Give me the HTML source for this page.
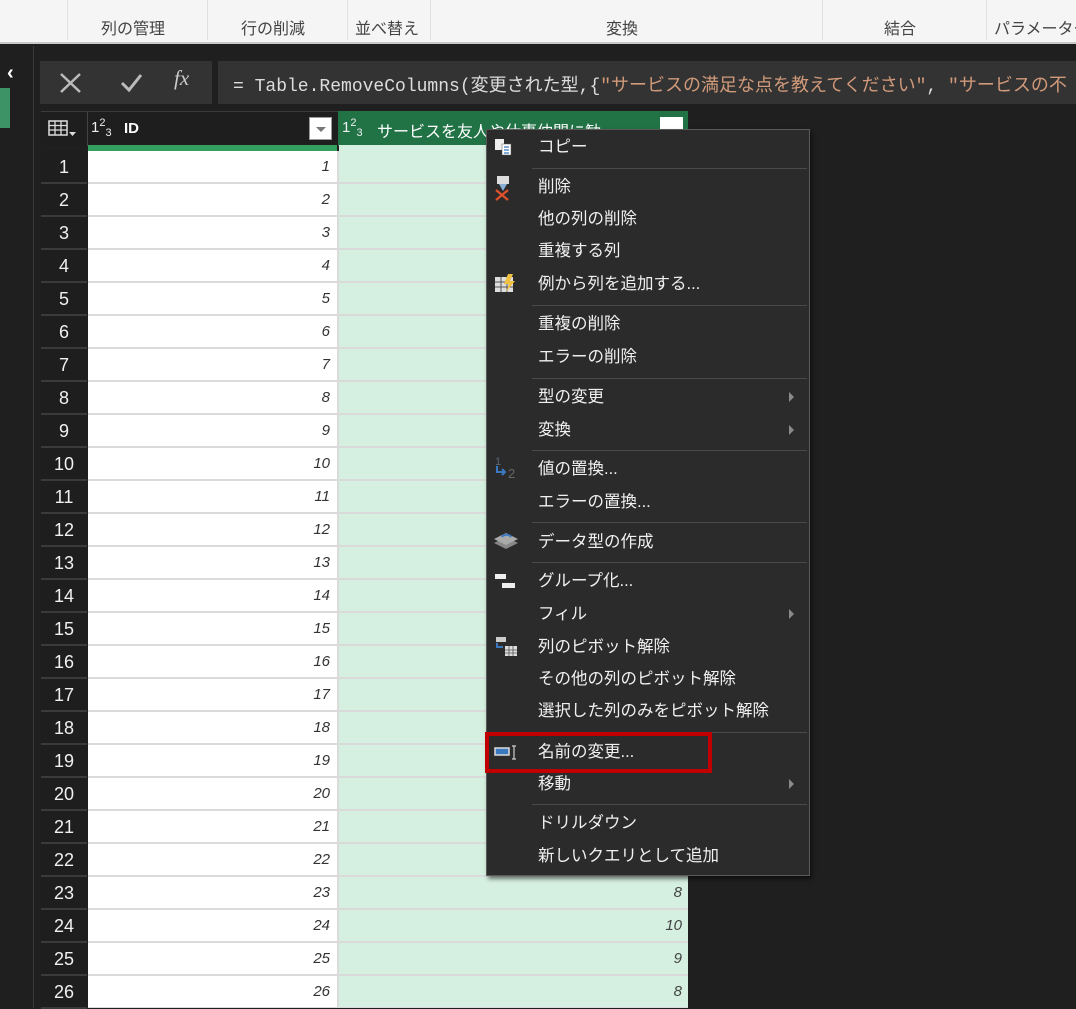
<!DOCTYPE html>
<html><head><meta charset="utf-8"><style>
*{margin:0;padding:0;box-sizing:border-box}
body{width:1076px;height:1008px;overflow:hidden;background:#1f1f1f;position:relative;font-family:"Liberation Sans","Noto Sans CJK JP",sans-serif}
.a{position:absolute}
.rib{left:0;top:0;width:1076px;height:44px;background:#f5f5f5;border-bottom:2px solid #c8c8c8}
.rl{top:15px;font-size:16px;color:#444;white-space:nowrap}
.rs{top:0;width:1px;height:40px;background:#e0e0e0}
.rh{left:41px;width:46px;height:33px;background:#1e1e1e;border-bottom:2px solid #3a3a3a;color:#f0f0f0;font-size:18px;text-align:center;line-height:33px}
.c1{left:88px;width:249px;height:31px;background:#fff;color:#333;font-size:15px;font-style:italic;text-align:right;padding-right:7px;line-height:31px}
.c2{left:339px;width:349px;height:31px;background:#d5efe0;color:#444;font-size:15px;font-style:italic;text-align:right;padding-right:6px;line-height:31px}
.mi{left:538px;font-size:16.5px;color:#f0f0f0;white-space:nowrap;line-height:20px}
.sep{left:532px;width:275px;height:1px;background:#4a4a4a}
.ar{left:789px;width:0;height:0;border-left:5px solid #8a8a8a;border-top:5px solid transparent;border-bottom:5px solid transparent}
</style></head><body>
<div class="a rib"></div>
<div class="a rs" style="left:67px"></div><div class="a rs" style="left:207px"></div><div class="a rs" style="left:347px"></div><div class="a rs" style="left:430px"></div><div class="a rs" style="left:822px"></div><div class="a rs" style="left:986px"></div>
<div class="a rl" style="left:101px">列の管理</div>
<div class="a rl" style="left:241px">行の削減</div>
<div class="a rl" style="left:355px">並べ替え</div>
<div class="a rl" style="left:606px">変換</div>
<div class="a rl" style="left:884px">結合</div>
<div class="a rl" style="left:994px">パラメーター</div>

<div class="a" style="left:33px;top:46px;width:1px;height:962px;background:#3a3a3a"></div>
<div class="a" style="left:0;top:88px;width:10px;height:40px;background:#3e9366"></div>
<div class="a" style="left:7px;top:62px;color:#fff;font-size:20px;font-weight:bold">&#8249;</div>

<div class="a" style="left:40px;top:61px;width:172px;height:43px;background:#333"></div>
<svg class="a" style="left:58px;top:71px" width="26" height="24"><path d="M3 3L22 21M22 3L3 21" stroke="#bbb" stroke-width="2.5"/></svg>
<svg class="a" style="left:119px;top:71px" width="26" height="24"><path d="M3 12L10 19L22 4" stroke="#bbb" stroke-width="3" fill="none"/></svg>
<div class="a" style="left:174px;top:66px;color:#ccc;font-size:21px;font-style:italic;font-family:'Liberation Serif',serif">fx</div>
<div class="a" style="left:218px;top:61px;width:858px;height:43px;background:#333"></div>
<div class="a" style="left:233px;top:71px;font-family:'Liberation Mono','Noto Sans CJK JP',monospace;font-size:18px;color:#ddd;white-space:nowrap">= Table.RemoveColumns(変更された型,{<span style="color:#d19a7a">"サービスの満足な点を教えてください"</span>, <span style="color:#d19a7a">"サービスの不</span></div>

<!-- header -->
<div class="a" style="left:41px;top:111px;width:647px;height:35px;background:#1e1e1e;border-top:1px solid #3a3a3a"></div>
<svg class="a" style="left:48px;top:120px" width="32" height="18"><rect x="1" y="1" width="18" height="14" fill="none" stroke="#ddd" stroke-width="1.5"/><path d="M1 5.5H19M1 10H19M7 1V15M13 1V15" stroke="#ddd" stroke-width="1.3"/><path d="M21 12L28 12L24.5 16Z" fill="#ddd"/></svg>
<div class="a" style="left:87px;top:112px;width:1px;height:34px;background:#444"></div>
<div class="a" style="left:91px;top:117px;color:#eee;font-size:15px">1<sup style="font-size:11px">2</sup><sub style="font-size:11px">3</sub></div>
<div class="a" style="left:124px;top:120px;color:#fff;font-size:15px;font-weight:bold">ID</div>
<div class="a" style="left:309px;top:117px;width:23px;height:23px;background:#fff;border:1px solid #999"></div>
<div class="a" style="left:316px;top:127px;border-left:5px solid transparent;border-right:5px solid transparent;border-top:5px solid #777"></div>
<div class="a" style="left:338px;top:111px;width:350px;height:35px;background:#217346"></div>
<div class="a" style="left:342px;top:117px;color:#eee;font-size:15px">1<sup style="font-size:11px">2</sup><sub style="font-size:11px">3</sub></div>
<div class="a" style="left:377px;top:118px;color:#fff;font-size:16px;white-space:nowrap">サービスを友人や仕事仲間に勧...</div>
<div class="a" style="left:660px;top:117px;width:23px;height:23px;background:#fff"></div>
<div class="a" style="left:88px;top:151px;width:600px;height:857px;background:#dadada"></div>
<div class="a" style="left:88px;top:145px;width:249px;height:6px;background:#33a060"></div>
<div class="a" style="left:339px;top:145px;width:349px;height:6px;background:#d5efe0"></div>

<!-- rows -->
<div id="rows"></div>
<script>
var v=[0,0,0,0,0,0,0,0,0,0,0,0,0,0,0,0,0,0,0,0,0,0,8,10,9,8];var h='';
for(var i=0;i<26;i++){var t=151+i*33;
h+='<div class="a rh" style="top:'+t+'px">'+(i+1)+'</div><div class="a c1" style="top:'+t+'px">'+(i+1)+'</div><div class="a c2" style="top:'+t+'px">'+(v[i]||'')+'</div>';}
document.getElementById('rows').outerHTML=h;
</script>

<!-- menu -->
<div class="a" style="left:486px;top:129px;width:324px;height:747px;background:#2b2b2b;border:1px solid #5a5a5a;box-shadow:2px 3px 4px rgba(0,0,0,.5)"></div>
<div class="a sep" style="top:168px"></div><div class="a sep" style="top:305px"></div><div class="a sep" style="top:378px"></div><div class="a sep" style="top:450px"></div><div class="a sep" style="top:522px"></div><div class="a sep" style="top:562px"></div><div class="a sep" style="top:732px"></div><div class="a sep" style="top:804px"></div>
<div class="a mi" style="top:137px">コピー</div>
<div class="a mi" style="top:177px">削除</div>
<div class="a mi" style="top:209px">他の列の削除</div>
<div class="a mi" style="top:241px">重複する列</div>
<div class="a mi" style="top:274px">例から列を追加する...</div>
<div class="a mi" style="top:314px">重複の削除</div>
<div class="a mi" style="top:347px">エラーの削除</div>
<div class="a mi" style="top:387px">型の変更</div><div class="a ar" style="top:392px"></div>
<div class="a mi" style="top:420px">変換</div><div class="a ar" style="top:425px"></div>
<div class="a mi" style="top:459px">値の置換...</div>
<div class="a mi" style="top:492px">エラーの置換...</div>
<div class="a mi" style="top:532px">データ型の作成</div>
<div class="a mi" style="top:571px">グループ化...</div>
<div class="a mi" style="top:604px">フィル</div><div class="a ar" style="top:609px"></div>
<div class="a mi" style="top:637px">列のピボット解除</div>
<div class="a mi" style="top:669px">その他の列のピボット解除</div>
<div class="a mi" style="top:701px">選択した列のみをピボット解除</div>
<div class="a mi" style="top:742px">名前の変更...</div>
<div class="a mi" style="top:774px">移動</div><div class="a ar" style="top:779px"></div>
<div class="a mi" style="top:813px">ドリルダウン</div>
<div class="a mi" style="top:846px">新しいクエリとして追加</div>

<!-- icons -->
<svg class="a" style="left:494px;top:137px" width="24" height="24"><rect x="1" y="2" width="9" height="11" fill="#eee"/><rect x="8" y="7" width="9" height="11" fill="#fff" stroke="#555" stroke-width=".5"/><path d="M10 10H15M10 13H15M10 16H15" stroke="#3a78c0" stroke-width="1.2"/></svg>
<svg class="a" style="left:494px;top:175px" width="24" height="26"><rect x="3" y="1" width="12" height="8" fill="#ddd"/><path d="M5 9L9 16L13 9Z" fill="#8ab0d8"/><path d="M2 15L14 25M14 15L2 25" stroke="#e0502a" stroke-width="2.2"/></svg>
<svg class="a" style="left:494px;top:273px" width="24" height="24"><rect x="1" y="4" width="18" height="15" fill="#ddd"/><path d="M1 9H19M1 14H19M7 4V19M13 4V19" stroke="#555"/><path d="M14 1L10 11H15L12 19L21 8H16L19 1Z" fill="#f0c040"/></svg>
<div class="a" style="left:495px;top:456px;color:#5a6a7a;font-size:11px">1</div>
<svg class="a" style="left:494px;top:464px" width="28" height="18"><path d="M3 2V8H10" stroke="#3a78c0" stroke-width="2" fill="none"/><path d="M8 5L11 8L8 11" stroke="#3a78c0" stroke-width="2" fill="none"/><text x="14" y="14" font-size="13" fill="#666" font-family="Liberation Sans">2</text></svg>
<svg class="a" style="left:492px;top:530px" width="28" height="26"><path d="M14 7L26 13L14 19L2 13Z" fill="#888"/><path d="M14 3L26 9L14 15L2 9Z" fill="#aaa"/><path d="M10 7A5 4 0 0 1 19 7" stroke="#3a78c0" stroke-width="2" fill="none"/></svg>
<svg class="a" style="left:494px;top:572px" width="24" height="20"><rect x="1" y="2" width="11" height="5" fill="#eee"/><rect x="8" y="11" width="13" height="5" fill="#eee"/></svg>
<svg class="a" style="left:494px;top:636px" width="26" height="24"><rect x="2" y="1" width="10" height="5" fill="#ccc"/><path d="M3 7V11H9" stroke="#3a78c0" stroke-width="2" fill="none"/><rect x="11" y="10" width="12" height="10" fill="#ddd"/><path d="M11 14H23M11 17H23M15 10V20M19 10V20" stroke="#555" stroke-width=".8"/></svg>
<svg class="a" style="left:494px;top:744px" width="26" height="18"><rect x="1" y="4" width="14" height="7" fill="#3a78c0" stroke="#ddd" stroke-width="1.5"/><path d="M20 2V15M18 2H22M18 15H22" stroke="#ccc" stroke-width="1.2"/></svg>

<div class="a" style="left:485px;top:732px;width:227px;height:41px;border:4px solid #c00000"></div>
</body></html>
